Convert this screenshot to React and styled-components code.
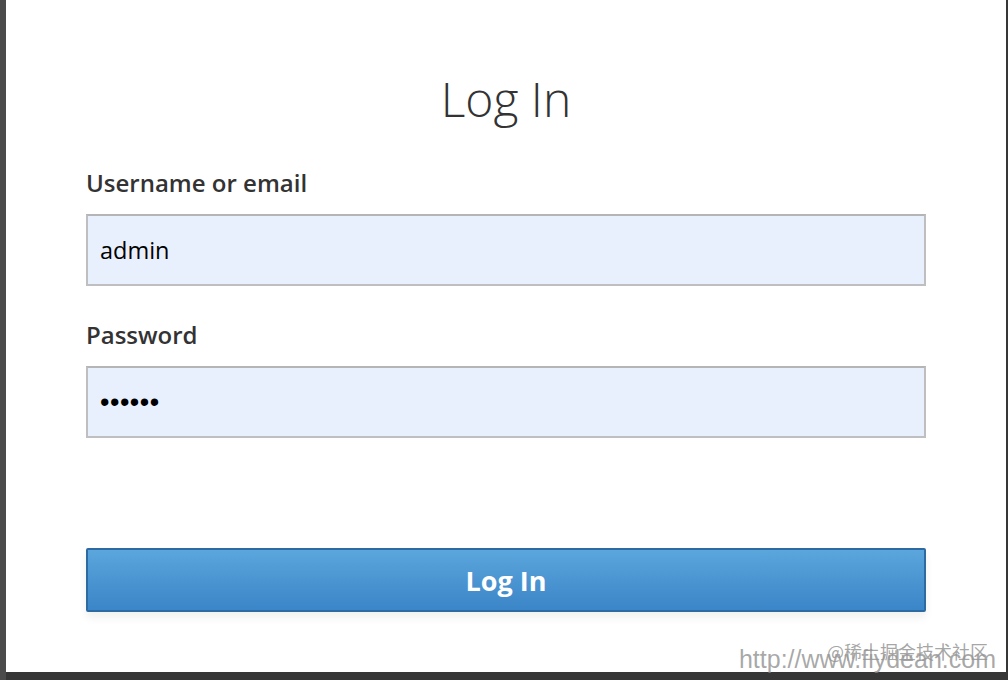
import React from "react";
import styled, { createGlobalStyle } from "styled-components";

const GlobalStyle = createGlobalStyle`
  html, body {
    margin: 0;
    padding: 0;
    background: #3a3a3a;
  }
  body {
    font-family: "Open Sans", "Liberation Sans", sans-serif;
  }
`;

const Frame = styled.div`
  width: 1008px;
  height: 680px;
  display: flex;
  background: linear-gradient(90deg, #4b4b4b 0, #4b4b4b 6px, #363636 6px);
  position: relative;
  overflow: hidden;
`;

const Panel = styled.main`
  flex: 1;
  margin: 0 2px 8px 6px;
  background: #fff;
  padding: 0 80px;
  display: flex;
  flex-direction: column;
`;

const Title = styled.h1`
  margin: 67px 0 0;
  text-align: center;
  font-size: 48px;
  font-weight: 300;
  color: #333;
  line-height: 64px;
`;

const Form = styled.form`
  display: flex;
  flex-direction: column;
  margin-top: 37px;
`;

const Field = styled.div`
  display: flex;
  flex-direction: column;
  margin-bottom: 34px;
`;

const Label = styled.label`
  font-size: 24px;
  font-weight: 600;
  color: #333;
  line-height: 30px;
  margin-bottom: 16px;
`;

const Input = styled.input`
  box-sizing: border-box;
  height: 72px;
  width: 100%;
  border: 2px solid #bfbfc2;
  border-top-color: #b5b5b8;
  background: #e8f0fe;
  padding: 0 12px;
  font-family: ${({ $dots }) =>
    $dots ? `"Liberation Sans", sans-serif` : `"Open Sans", "Liberation Sans", sans-serif`};
  font-size: ${({ $dots }) => ($dots ? "27px" : "23.5px")};
  letter-spacing: ${({ $dots }) => ($dots ? "0.5px" : "0")};
  color: #000;
  outline: none;
`;

const Button = styled.button`
  margin-top: 76px;
  height: 64px;
  width: 100%;
  border: 2px solid #2d6aa2;
  border-radius: 2px;
  background: linear-gradient(180deg, #5ba6dc 0%, #4b95d2 50%, #3b86c8 100%);
  color: #fff;
  font-family: "Open Sans", "Liberation Sans", sans-serif;
  font-size: 27px;
  font-weight: 700;
  box-shadow: 0 6px 8px rgba(0, 0, 0, 0.06);
  cursor: pointer;
`;

const Watermark = styled.div`
  position: absolute;
  right: 12px;
  bottom: 6px;
  color: rgba(140, 140, 140, 0.75);
  font-family: "Liberation Sans", sans-serif;
  font-size: 25px;
  line-height: 30px;
  pointer-events: none;
`;

const Stamp = styled.span`
  position: absolute;
  right: 8px;
  bottom: 8px;
  font-family: "Noto Sans CJK SC", sans-serif;
  font-size: 18px;
  color: rgba(150, 150, 150, 0.85);
  white-space: nowrap;
`;

export default function App() {
  return (
    <>
      <GlobalStyle />
      <Frame>
        <Panel>
          <Title>Log In</Title>
          <Form onSubmit={(e) => e.preventDefault()}>
            <Field>
              <Label htmlFor="username">Username or email</Label>
              <Input id="username" type="text" defaultValue="admin" />
            </Field>
            <Field>
              <Label htmlFor="password">Password</Label>
              <Input id="password" type="password" defaultValue="123456" $dots />
            </Field>
            <Button type="submit">Log In</Button>
          </Form>
        </Panel>
        <Watermark>
          http://www.fiydean.com
          <Stamp>@稀土掘金技术社区</Stamp>
        </Watermark>
      </Frame>
    </>
  );
}
